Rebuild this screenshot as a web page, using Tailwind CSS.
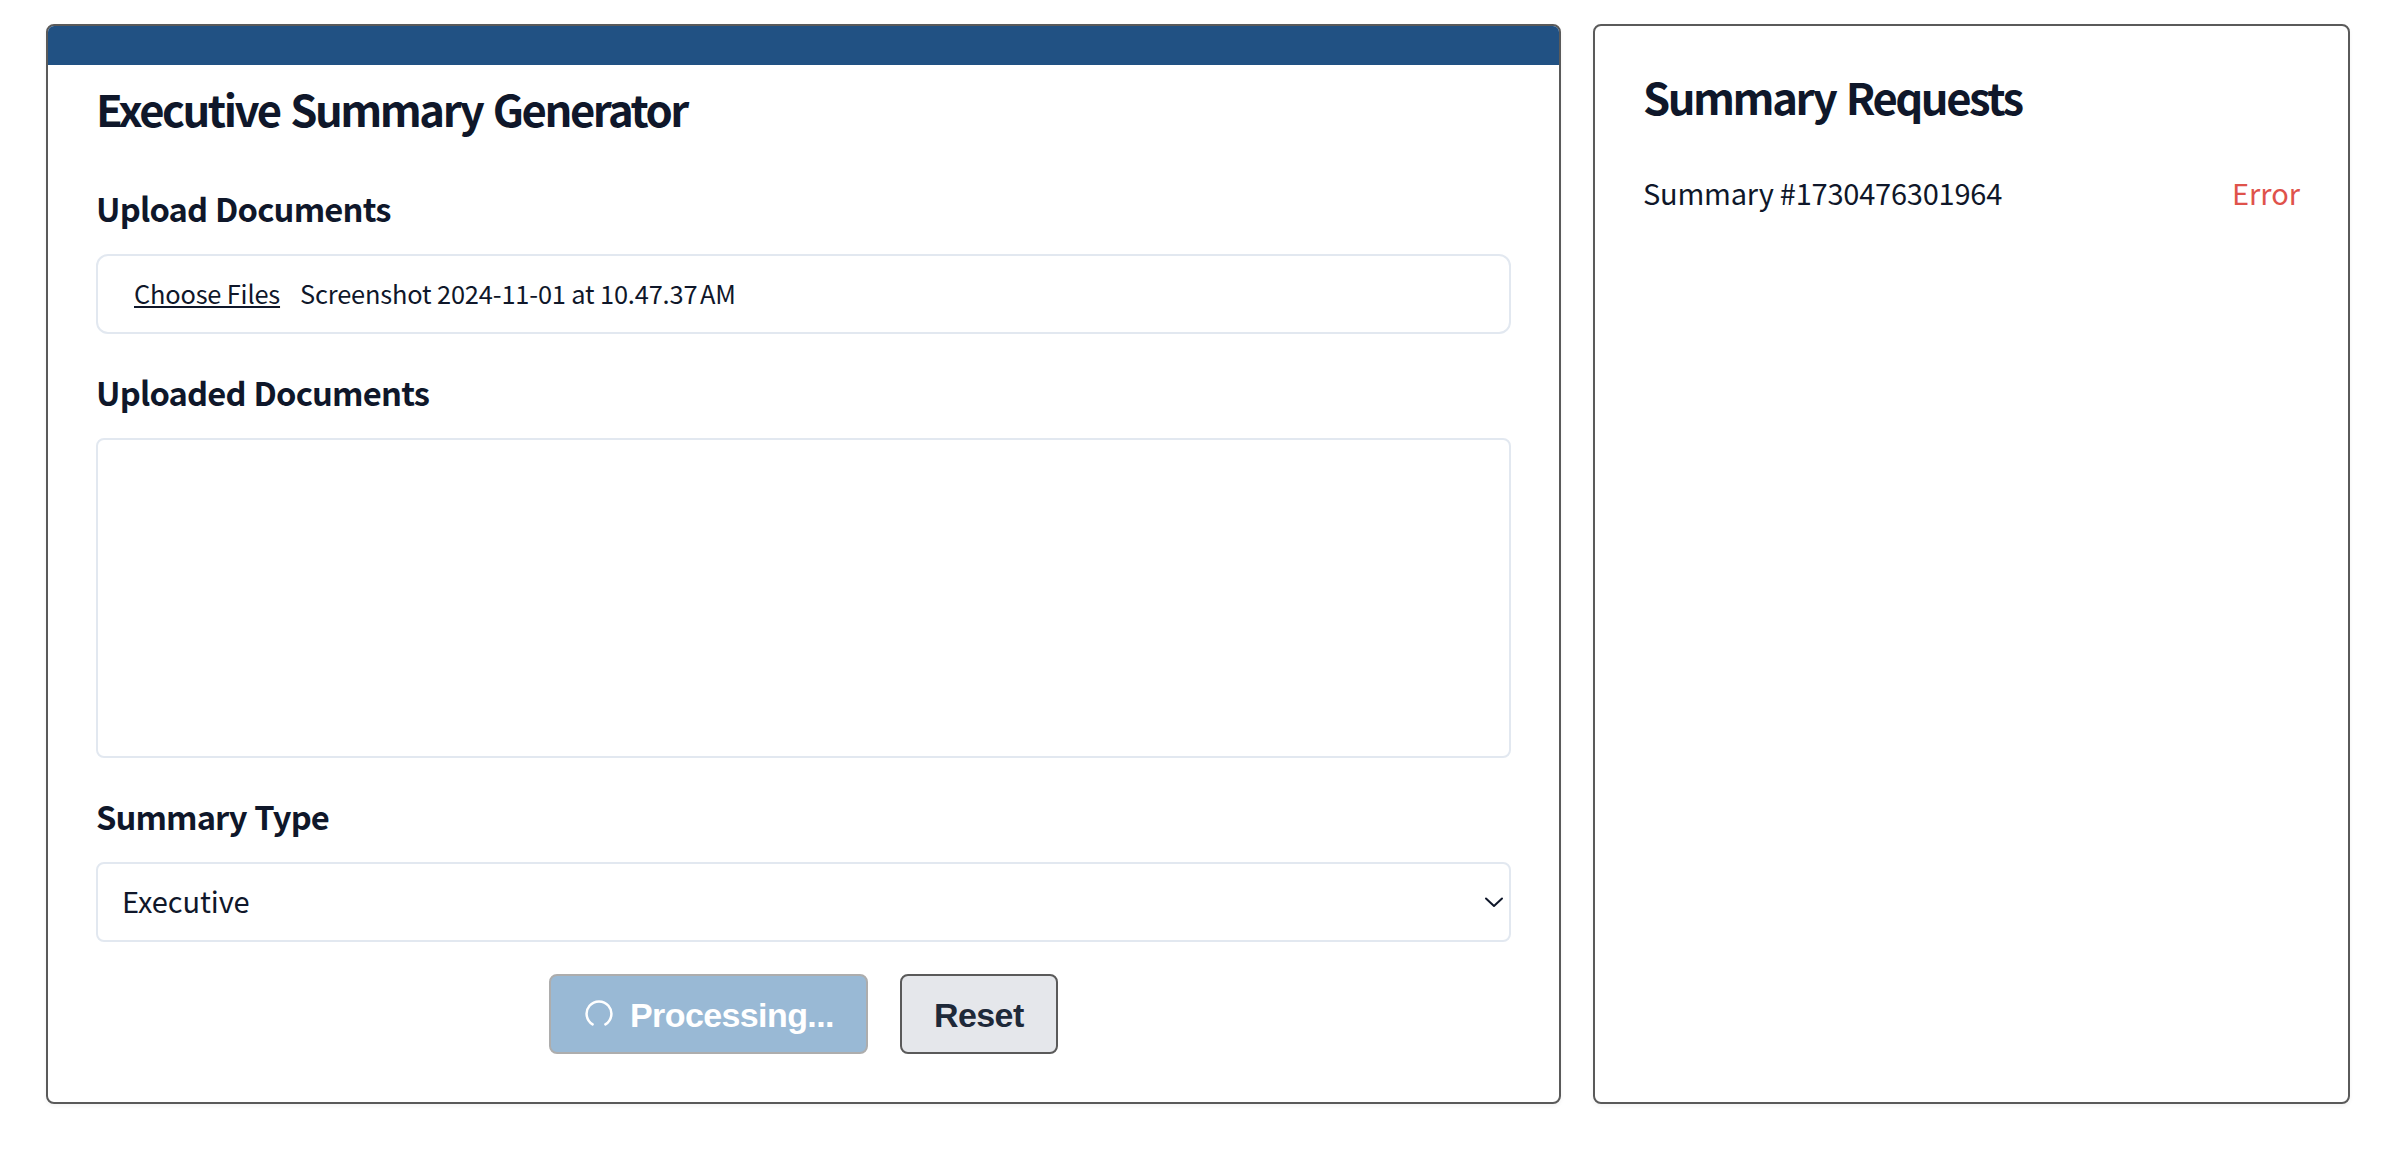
<!DOCTYPE html>
<html lang="en">
<head>
<meta charset="utf-8">
<title>Executive Summary Generator</title>
<script src="https://cdn.jsdelivr.net/npm/@tailwindcss/browser@4"></script>
</head>
<body class="bg-white text-[#0f172a] font-['Noto_Sans_CJK_SC',sans-serif]">
<main class="flex h-[1158px] items-start gap-8 pt-6 pl-[46px]">
  <section class="flex h-[1080px] w-[1515px] shrink-0 flex-col overflow-hidden rounded-lg border-2 border-[#5a5a5a] bg-white shadow-[0_2px_4px_rgba(0,0,0,0.05)]">
    <div class="h-[39px] shrink-0 bg-[#215183]"></div>
    <div class="flex flex-col px-12 pt-[19px]">
      <h1 class="text-[43.6px] leading-[48px] font-bold tracking-[-2.46px] [word-spacing:3px] whitespace-nowrap">Executive Summary Generator</h1>

      <h2 class="mt-[58px] text-[32.7px] leading-9 font-bold tracking-[-0.8px] [word-spacing:1px]">Upload Documents</h2>
      <div class="mt-7 flex h-20 items-center gap-[20px] rounded-xl border-2 border-slate-200 pb-[2px] pl-9 text-[25.4px] leading-8 whitespace-nowrap">
        <button class="tracking-[-0.18px] underline decoration-2 underline-offset-2">Choose Files</button>
        <span class="tracking-[-0.16px]">Screenshot 2024-11-01 at 10.47.37&#8239;AM</span>
      </div>

      <h2 class="mt-10 text-[32.7px] leading-9 font-bold tracking-[-0.8px] [word-spacing:1px]">Uploaded Documents</h2>
      <div class="mt-7 h-80 rounded-lg border-2 border-slate-200"></div>

      <h2 class="mt-10 text-[32.7px] leading-9 font-bold tracking-[-0.9px] [word-spacing:1px]">Summary Type</h2>
      <div class="mt-7 flex h-20 items-center justify-between rounded-lg border-2 border-slate-200 pr-[5px] pl-6 text-[29px] leading-10">
        <span class="pb-[5px] tracking-[-0.1px]">Executive</span>
        <svg class="size-5" viewBox="0 0 20 20" fill="none" stroke="currentColor" stroke-width="2" stroke-linecap="round" stroke-linejoin="round"><path d="M2 6.5 10 14 18 6.5"/></svg>
      </div>

      <div class="mt-8 flex justify-center gap-8 text-[34px] leading-10 font-bold tracking-[-0.6px] font-['Liberation_Sans',sans-serif]">
        <button class="flex h-20 w-[319px] items-center gap-[15px] rounded-lg border-2 border-[#adadad] bg-[#99b9d5] pl-8 text-white" disabled>
          <svg class="size-8 shrink-0" viewBox="0 0 32 32" fill="none" stroke="currentColor" stroke-width="2.5" stroke-linecap="round"><path d="M9.6 26.4A12.4 12.4 0 1 1 22.4 26.4"/></svg>
          <span class="pt-px">Processing...</span>
        </button>
        <button class="flex h-20 w-[158px] items-center rounded-lg border-2 border-[#5a5a5a] bg-gray-200 pl-8 text-gray-800"><span class="pt-px">Reset</span></button>
      </div>
    </div>
  </section>

  <section class="h-[1080px] w-[757px] shrink-0 rounded-lg border-2 border-[#5a5a5a] bg-white px-12 pt-[46px] shadow-[0_2px_4px_rgba(0,0,0,0.05)]">
    <h1 class="text-[43.6px] leading-[48px] font-bold tracking-[-2.46px] [word-spacing:3px]">Summary Requests</h1>
    <div class="mt-[52px] flex justify-between text-[29px] leading-10">
      <span class="tracking-[-0.22px]">Summary #1730476301964</span>
      <span class="text-[#df524b]">Error</span>
    </div>
  </section>
</main>
</body>
</html>
